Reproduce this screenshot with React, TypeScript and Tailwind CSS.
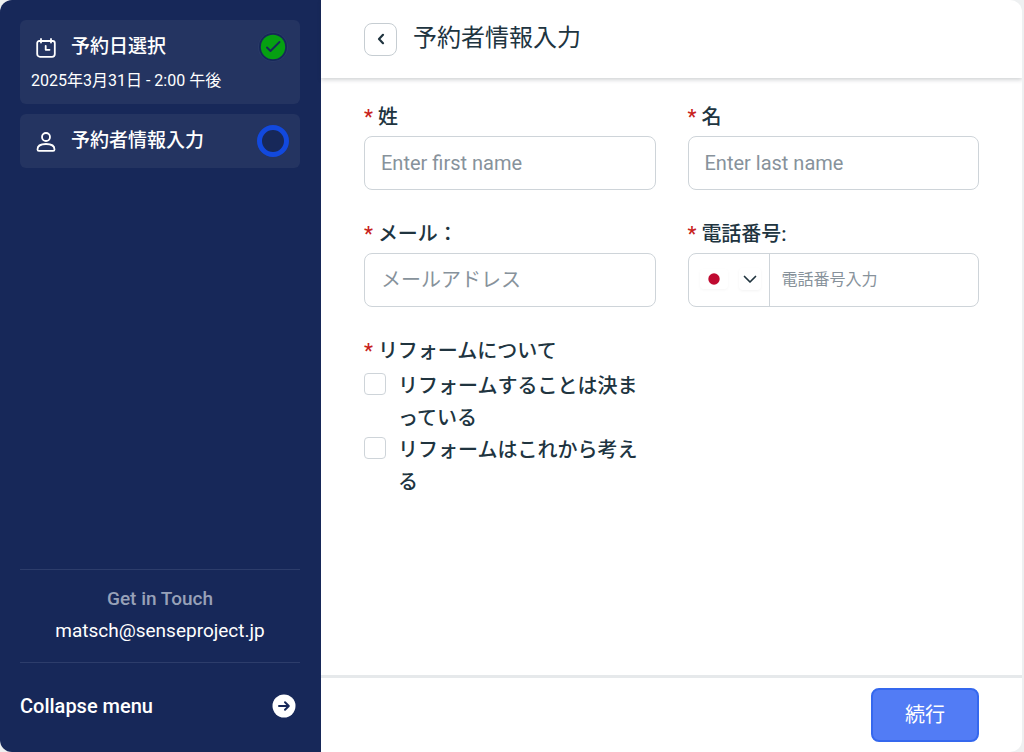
import React from "react";

interface StepCardProps {
  icon: React.ReactNode;
  title: string;
  detail?: string;
  status: React.ReactNode;
}

interface FieldProps {
  id: string;
  label: string;
  children: React.ReactNode;
}

const CalendarIcon: React.FC = () => (
  <svg viewBox="0 0 20 20" className="w-5 h-5 mt-0.5" fill="none" stroke="currentColor" strokeWidth="1.8" strokeLinecap="round" strokeLinejoin="round">
    <path d="M5 1v3.500M15 1v3.500" />
    <path d="M1.200 5A2 2 0 0 1 3.200 3H16.800A2 2 0 0 1 18.800 5V16A2.800 2.800 0 0 1 16 18.800H4A2.800 2.800 0 0 1 1.200 16Z" />
    <path d="M9.700 7.800v4H13.500" />
  </svg>
);

const UserIcon: React.FC = () => (
  <svg viewBox="0 0 20 20" className="w-5 h-5 mt-0.5" fill="none" stroke="currentColor" strokeWidth="1.8" strokeLinejoin="round">
    <circle cx="10" cy="5" r="4" />
    <path d="M1.500 17.400C1.500 14 5 12 10 12s8.500 2 8.500 5.400c0 .9-.5 1.400-1.400 1.400H2.900c-.9 0-1.400-.5-1.400-1.400Z" />
  </svg>
);

const DoneIcon: React.FC = () => (
  <svg viewBox="0 0 32 32" className="w-8 h-8" fill="none">
    <circle cx="16" cy="16" r="15" fill="#2a3a68" />
    <circle cx="16" cy="16" r="14" fill="#172859" />
    <circle cx="16" cy="16" r="12.200" fill="#06a012" />
    <path d="M10 16.500l3.500 3.500L22.500 11" stroke="#172859" strokeWidth="1.900" strokeLinecap="round" strokeLinejoin="round" />
  </svg>
);

const CurrentIcon: React.FC = () => (
  <svg viewBox="0 0 32 32" className="w-8 h-8">
    <circle cx="16" cy="16" r="13.500" fill="#172859" stroke="#1249de" strokeWidth="5" />
  </svg>
);

const StepCard: React.FC<StepCardProps> = ({ icon, title, detail, status }) => (
  <li className="rounded-md bg-[#243461] px-[11px] py-[11px]">
    <div className="flex items-center h-8 pl-[5px]">
      {icon}
      <span className="flex-1 ml-[15px] text-[19px] leading-8 font-medium">{title}</span>
      {status}
    </div>
    {detail && <p className="pt-1.5 text-base leading-6">{detail}</p>}
  </li>
);

const Required: React.FC = () => <span className="mr-[5px] text-[#c8231c]">*</span>;

const Field: React.FC<FieldProps> = ({ id, label, children }) => (
  <div>
    <label htmlFor={id} className="block mb-[3px] text-xl leading-8 font-medium">
      <Required />
      {label}
    </label>
    {children}
  </div>
);

const inputStyle =
  "block w-full h-[54px] rounded-lg border border-[#ced4d9] bg-white px-4 text-xl placeholder:text-[#87929b] outline-none focus:border-[#527cf5]";

const options = ["リフォームすることは決まっている", "リフォームはこれから考える"];

const App: React.FC = () => {
  return (
    <div className="bg-[#eef0f1]">
      <div className="flex min-h-screen mr-0.5 rounded-xl overflow-hidden bg-white font-['Roboto','Noto_Sans_CJK_JP',sans-serif] text-[#20343f]" lang="ja">
        <aside className="flex flex-col w-[321px] shrink-0 bg-[#172859] pl-5 pr-[21px] pt-5 text-white">
          <ol className="flex flex-col gap-2.5">
            <StepCard icon={<CalendarIcon />} title="予約日選択" detail="2025年3月31日 - 2:00 午後" status={<DoneIcon />} />
            <StepCard icon={<UserIcon />} title="予約者情報入力" status={<CurrentIcon />} />
          </ol>

          <div className="mt-auto border-y border-[#2d3d6b] pt-[13px] pb-[15px] text-center">
            <p className="text-[19px] leading-8 font-medium text-[#98a1b8]">Get in Touch</p>
            <a href="mailto:matsch@senseproject.jp" className="block text-[19px] leading-8">matsch@senseproject.jp</a>
          </div>

          <button type="button" className="flex items-center justify-between h-[89px] pr-1 pb-1 text-xl font-medium">
            Collapse menu
            <svg viewBox="0 0 24 24" className="w-6 h-6" fill="none">
              <circle cx="12" cy="12" r="11.500" fill="#fff" />
              <path d="M7 12h9.500M13 8.200l3.800 3.800L13 15.800" stroke="#172859" strokeWidth="2" strokeLinecap="round" strokeLinejoin="round" />
            </svg>
          </button>
        </aside>

        <main className="flex flex-col flex-1 min-w-0">
          <header className="flex items-center gap-4 h-[78px] px-[43px] shadow-[0_2px_4px_rgba(30,40,50,0.2)]">
            <button type="button" aria-label="戻る" className="flex items-center justify-center w-[33px] h-[33px] rounded-lg border border-[#c6cdd2]">
              <svg viewBox="0 0 16 16" className="w-4 h-4" fill="none" stroke="currentColor" strokeWidth="2.200" strokeLinecap="round" strokeLinejoin="round">
                <path d="M10 3.800L6 8l4 4.200" />
              </svg>
            </button>
            <h1 className="pb-0.5 text-2xl leading-8">予約者情報入力</h1>
          </header>

          <form id="booking" className="flex-1 grid grid-cols-2 content-start gap-x-8 gap-y-7 px-[43px] pt-[23px]">
            <Field id="first" label="姓">
              <input id="first" type="text" placeholder="Enter first name" className={inputStyle} />
            </Field>
            <Field id="last" label="名">
              <input id="last" type="text" placeholder="Enter last name" className={inputStyle} />
            </Field>
            <Field id="email" label="メール：">
              <input id="email" type="email" placeholder="メールアドレス" className={inputStyle} />
            </Field>
            <Field id="phone" label="電話番号:">
              <div className="flex h-[54px] rounded-lg border border-[#ced4d9]">
                <div className="relative w-[81px] shrink-0 border-r border-[#ced4d9]">
                  <select aria-label="国" className="w-full h-full appearance-none bg-transparent outline-none">
                    <option value="jp" aria-label="日本"></option>
                  </select>
                  <div className="absolute inset-0 flex items-center justify-between pl-[11px] pr-2 pb-0.5 pointer-events-none">
                    <svg viewBox="0 0 28 20" className="w-7 h-5 rounded-sm shadow-[0_1px_3px_rgba(0,0,0,0.04)]">
                      <circle cx="14" cy="10" r="5.700" fill="#bf0a30" />
                    </svg>
                    <svg viewBox="0 0 22 22" className="w-[22px] h-[22px] rounded-sm shadow-[0_1px_3px_rgba(0,0,0,0.05)]" fill="none" stroke="currentColor" strokeWidth="1.700" strokeLinecap="round" strokeLinejoin="round">
                      <path d="M5.500 8.500L11 14l5.500-5.500" />
                    </svg>
                  </div>
                </div>
                <input id="phone" type="tel" placeholder="電話番号入力" className="flex-1 min-w-0 px-3 text-base placeholder:text-[#87929b] outline-none" />
              </div>
            </Field>

            <fieldset className="text-xl leading-8 font-medium">
              <legend className="mb-[3px]">
                <Required />
                リフォームについて
              </legend>
              {options.map((option) => (
                <label key={option} className="flex items-start gap-3">
                  <input type="checkbox" className="w-[22px] h-[22px] mt-[3px] shrink-0 appearance-none rounded-sm border border-[#ced4d9] checked:bg-[#527cf5]" />
                  <span className="w-60">{option}</span>
                </label>
              ))}
            </fieldset>
          </form>

          <footer className="flex justify-end border-t-3 border-[#e6e9eb] px-[43px] pt-2.5 pb-2.5">
            <button type="submit" form="booking" className="w-[108px] h-[54px] rounded-lg border-2 border-[#3568ee] bg-[#527cf5] text-xl text-white">続行</button>
          </footer>
        </main>
      </div>
    </div>
  );
};

export default App;
